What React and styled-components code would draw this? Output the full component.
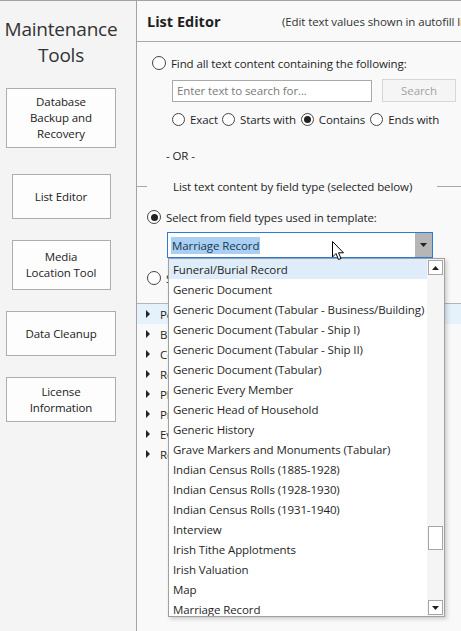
import React from 'react'
import styled, { createGlobalStyle } from 'styled-components'

const Global = createGlobalStyle`
body{margin:0;background:#f9f9f9;}
*{box-sizing:border-box;}
`
const FONT = `"Open Sans", "Noto Sans", sans-serif`

const Shell = styled.div`
width:461px;
height:631px;
display:flex;
border-top:1px solid #a3a3a3;
font-family:${FONT};
font-size:11.5px;
letter-spacing:-0.1px;
color:#1f1f1f;
overflow:hidden;
`
const Sidebar = styled.div`
width:137px;
flex:none;
background:#f4f4f4;
border-right:1px solid #a3a3a3;
padding:15px 14px 0 0;
display:flex;
flex-direction:column;
align-items:center;
`
const SideTitle = styled.div`
font-size:19px;
line-height:26px;
text-align:center;
color:#333;
margin-bottom:20px;
letter-spacing:-0.2px;
`
const ToolButton = styled.div`
width:${p => (p.$wide ? 110 : 99)}px;
height:${p => p.$h}px;
margin-bottom:${p => p.$mb || 21}px;
background:#fdfdfd;
border:1px solid #adadad;
display:flex;
align-items:center;
justify-content:center;
text-align:center;
line-height:16px;
color:#222;
padding:0 4px;
white-space:nowrap;
`
const Main = styled.div`
flex:1;
position:relative;
background:#f9f9f9;
display:flex;
flex-direction:column;
`
const Header = styled.div`
height:41px;
border-bottom:1px solid #a8a8a8;
display:flex;
align-items:center;
padding-left:10px;
white-space:nowrap;
`
const HeaderTitle = styled.span`
font-weight:700;
font-size:14.5px;
letter-spacing:0;
width:135px;
`
const HeaderNote = styled.span`
color:#333;
`
const Row = styled.div`
display:flex;
align-items:center;
height:${p => p.$h || 18}px;
margin-top:${p => p.$mt || 0}px;
padding-left:${p => p.$pl || 0}px;
gap:${p => p.$gap || 0}px;
white-space:nowrap;
`
const RadioDot = styled.span`
width:${p => p.$size || 14}px;
height:${p => p.$size || 14}px;
border-radius:50%;
border:1px solid #444;
background:#fff;
flex:none;
display:flex;
align-items:center;
justify-content:center;
margin-right:5px;
&::after{
  content:'';
  width:${p => (p.$on ? 7 : 0)}px;
  height:${p => (p.$on ? 7 : 0)}px;
  border-radius:50%;
  background:#222;
}
`
const Choice = styled.label`
display:flex;
align-items:center;
margin-right:${p => p.$mr || 0}px;
`
const Radio = ({ on, size, children, mr }) => (
  <Choice $mr={mr}>
    <RadioDot $on={on} $size={size} />
    {children}
  </Choice>
)
const SearchInput = styled.div`
width:200px;
height:22px;
background:#fff;
border:1px solid #a9a9a9;
color:#7a7a7a;
padding-left:4px;
display:flex;
align-items:center;
`
const SearchButton = styled.div`
width:74px;
height:23px;
border:1px solid #d6d6d6;
background:#f5f5f5;
color:#a3a3a3;
display:flex;
align-items:center;
justify-content:center;
`
const GroupHead = styled.div`
display:flex;
align-items:center;
margin-top:13px;
height:18px;
white-space:nowrap;
&::before,&::after{
  content:'';
  height:1px;
  background:#a8a8a8;
}
&::before{width:10px;margin-right:26px;}
&::after{flex:1;margin-left:25px;}
`
const Combo = styled.div`
margin:6px 0 0 30px;
width:266px;
height:26px;
border:1px solid #2b7cd3;
background:#fff;
display:flex;
align-items:stretch;
`
const ComboValue = styled.div`
flex:1;
display:flex;
align-items:center;
padding-left:3px;
span{background:#a9d0f2;color:#1c3550;padding:1px 1px;}
`
const ComboArrow = styled.div`
width:17px;
background:#b6b6b6;
display:flex;
align-items:center;
justify-content:center;
`
const Tree = styled.div`
margin-top:16px;
border-top:1px solid #b5b5b5;
`
const TreeRow = styled.div`
height:20px;
display:flex;
align-items:center;
padding-left:9px;
gap:10px;
background:${p => (p.$sel ? '#e5f1fb' : 'transparent')};
`
const Caret = styled.span`
width:0;
height:0;
border-top:4px solid transparent;
border-bottom:4px solid transparent;
border-left:4px solid #222;
`
const Popup = styled.div`
position:absolute;
left:31px;
top:257px;
width:277px;
height:359px;
background:#fff;
border:1px solid #a0a0a0;
box-shadow:2px 2px 4px rgba(0,0,0,0.18);
display:flex;
`
const PopupList = styled.div`
flex:1;
padding-top:0;
overflow:hidden;
`
const Item = styled.div`
height:20px;
display:flex;
align-items:center;
padding-left:4px;
white-space:nowrap;
background:${p => (p.$hi ? '#deedf9' : 'transparent')};
`
const Scroll = styled.div`
width:17px;
background:#f5f5f5;
display:flex;
flex-direction:column;
align-items:center;
padding:1px 0;
`
const ScrollBtn = styled.div`
width:15px;
height:15px;
border:1px solid #a6a6a6;
background:#fff;
display:flex;
align-items:center;
justify-content:center;
margin-top:${p => (p.$end ? 'auto' : '0')};
`
const Thumb = styled.div`
width:15px;
height:24px;
border:1px solid #a6a6a6;
background:#fff;
margin-top:${p => p.$top}px;
`
const Pointer = styled.svg`
position:absolute;
left:195px;
top:240px;
`

const items = [
  'Funeral/Burial Record',
  'Generic Document',
  'Generic Document (Tabular - Business/Building)',
  'Generic Document (Tabular - Ship I)',
  'Generic Document (Tabular - Ship II)',
  'Generic Document (Tabular)',
  'Generic Every Member',
  'Generic Head of Household',
  'Generic History',
  'Grave Markers and Monuments (Tabular)',
  'Indian Census Rolls (1885-1928)',
  'Indian Census Rolls (1928-1930)',
  'Indian Census Rolls (1931-1940)',
  'Interview',
  'Irish Tithe Applotments',
  'Irish Valuation',
  'Map',
  'Marriage Record',
]
const tree = ['Person', 'Birth', 'Census', 'Residence', 'Place', 'Probate', 'Event', 'Relationship']

const Tri = ({ up }) => (
  <svg width="7" height="4" viewBox="0 0 7 4">
    <path d={up ? 'M0 4 L3.5 0 L7 4Z' : 'M0 0 L7 0 L3.5 4Z'} fill="#222" />
  </svg>
)

export default function App() {
  return (
    <Shell>
      <Global />
      <Sidebar>
        <SideTitle>Maintenance<br />Tools</SideTitle>
        <ToolButton $wide $h={60} $mb={26}>Database<br />Backup and<br />Recovery</ToolButton>
        <ToolButton $h={45}>List Editor</ToolButton>
        <ToolButton $h={50}>Media<br />Location Tool</ToolButton>
        <ToolButton $wide $h={45}>Data Cleanup</ToolButton>
        <ToolButton $wide $h={45}>License<br />Information</ToolButton>
      </Sidebar>
      <Main>
        <Header>
          <HeaderTitle>List Editor</HeaderTitle>
          <HeaderNote>(Edit text values shown in autofill lists)</HeaderNote>
        </Header>
        <Row $mt={12} $pl={15}>
          <Radio>Find all text content containing the following:</Radio>
        </Row>
        <Row $mt={7} $h={23} $pl={35} $gap={10}>
          <SearchInput>Enter text to search for...</SearchInput>
          <SearchButton>Search</SearchButton>
        </Row>
        <Row $mt={8} $pl={35}>
          <Radio size={13} mr={4}>Exact</Radio>
          <Radio size={13} mr={5}>Starts with</Radio>
          <Radio size={13} on mr={5}>Contains</Radio>
          <Radio size={13}>Ends with</Radio>
        </Row>
        <Row $mt={18} $pl={29}>- OR -</Row>
        <GroupHead>List text content by field type (selected below)</GroupHead>
        <Row $mt={13} $pl={10}>
          <Radio on>Select from field types used in template:</Radio>
        </Row>
        <Combo>
          <ComboValue><span>Marriage Record</span></ComboValue>
          <ComboArrow><Tri /></ComboArrow>
        </Combo>
        <Row $mt={11} $pl={10}>
          <Radio>Show all field types</Radio>
        </Row>
        <Tree>
          {tree.map((t, i) => (
            <TreeRow key={t} $sel={i === 0}><Caret />{t}</TreeRow>
          ))}
        </Tree>
        <Popup>
          <PopupList>
            {items.map((t, i) => (
              <Item key={t} $hi={i === 0}>{t}</Item>
            ))}
          </PopupList>
          <Scroll>
            <ScrollBtn><Tri up /></ScrollBtn>
            <Thumb $top={251} />
            <ScrollBtn $end><Tri /></ScrollBtn>
          </Scroll>
        </Popup>
        <Pointer width="13" height="20" viewBox="0 0 13 20">
          <path d="M0.5 0.5 L0.5 16 L4 12.5 L6.5 18.5 L9 17.5 L6.5 11.8 L11.5 11.8 Z" fill="#fff" stroke="#000" strokeWidth="1" strokeLinejoin="round" />
        </Pointer>
      </Main>
    </Shell>
  )
}
